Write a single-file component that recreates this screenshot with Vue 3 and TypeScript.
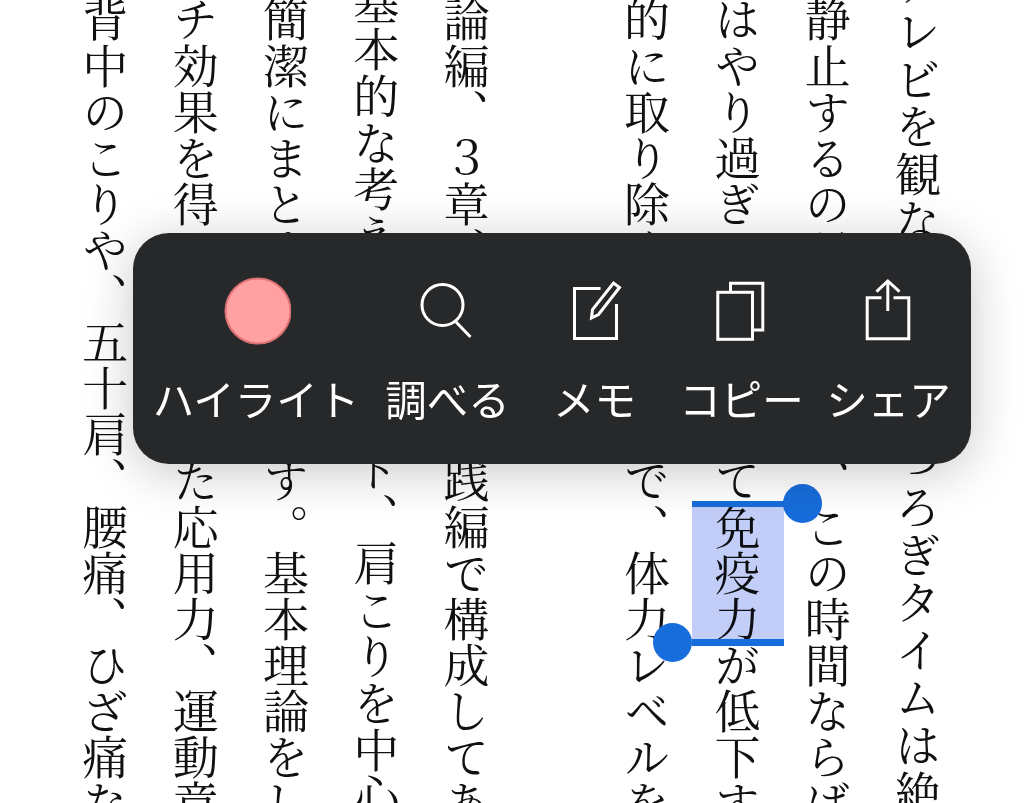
<script setup lang="ts">
interface Column {
  text: string
  top: number
  spacing: number
}

const columns: Column[] = [
  { text: 'テレビを観ながらのくつろぎタイムは絶', top: -39.6, spacing: 1.6 },
  { text: '静止するのがよいです、この時間ならば', top: -4, spacing: 0.1 },
  { text: 'はやり過ぎると、疲れて免疫力が低下す', top: -4, spacing: 0.1 },
  { text: '的に取り除くことなどで、体力レベルを', top: -4, spacing: 0.1 },
  { text: '', top: -4, spacing: 0.1 },
  { text: '論編、３章、４章の実践編で構成してあ', top: -4, spacing: 0.1 },
  { text: '基本的な考え方とノート、肩こりを中心', top: -20.7, spacing: 0.7 },
  { text: '簡潔にまとめてあります。基本理論をし', top: -4, spacing: 0.1 },
  { text: 'チ効果を得るようにした応用力、運動章', top: -4, spacing: 0.1 },
  { text: '背中のこりや、五十肩、腰痛、ひざ痛な', top: -4, spacing: 0.1 },
]
</script>

<template>
  <div class="screen" lang="ja">
    <div class="page">
      <div
        v-for="(col, i) in columns"
        :key="i"
        class="column"
        :style="{ marginTop: col.top + 'px', letterSpacing: col.spacing + 'px' }"
      >{{ col.text }}</div>
    </div>

    <div class="selection">
      <span class="tint"></span>
      <span class="handle handle-top"></span>
      <span class="handle handle-bottom"></span>
    </div>

    <div class="menu">
      <div class="item">
        <svg class="icon" viewBox="0 0 70 70">
          <circle cx="37" cy="35" r="32.5" fill="#ffa0a3" stroke="#dd7275" stroke-width="2" />
        </svg>
        <span class="label">ハイライト</span>
      </div>
      <div class="item">
        <svg class="icon" viewBox="0 0 70 70">
          <circle class="line" cx="29.5" cy="29" r="20.5" />
          <path class="line" d="M43 46 L57.5 61" />
        </svg>
        <span class="label">調べる</span>
      </div>
      <div class="item">
        <svg class="icon" viewBox="0 0 70 70">
          <path class="line" d="M40.5 12.5 H14.5 V62.5 H56.5 V28" />
          <path class="line" d="M31.5 42 L32.5 33.5 L53.5 7 L59.5 11.5 L38.5 38.5 Z" />
        </svg>
        <span class="label">メモ</span>
      </div>
      <div class="item">
        <svg class="icon" viewBox="0 0 70 70">
          <rect class="line" x="10.8" y="16.3" width="34.7" height="47" />
          <path class="line" d="M23.5 16.3 V7.3 H55.8 V54 H45.5" />
        </svg>
        <span class="label">コピー</span>
      </div>
      <div class="item">
        <svg class="icon" viewBox="0 0 70 70">
          <path class="line" d="M27.5 21.7 H13.2 V62.7 H54.8 V21.7 H39.5" />
          <path class="line" d="M33.8 35 V5 M22.5 15.7 L33.8 5 L45.5 15.7" />
        </svg>
        <span class="label">シェア</span>
      </div>
    </div>
  </div>
</template>

<style scoped>
.screen {
  position: relative;
  width: 1024px;
  height: 803px;
  overflow: hidden;
  background: #fff;
}

.page {
  display: flex;
  flex-direction: row-reverse;
  height: 803px;
  padding-right: 61px;
  box-sizing: border-box;
}

.column {
  flex: none;
  width: 90.3px;
  height: 900px;
  writing-mode: vertical-rl;
  white-space: nowrap;
  font-family: "Noto Serif CJK JP", "Noto Sans CJK JP", serif;
  font-size: 46px;
  line-height: 90.3px;
  color: #111;
}

.selection {
  position: absolute;
  left: 691.5px;
  top: 501px;
  width: 92.5px;
  height: 145px;
  box-sizing: border-box;
  border-top: 6px solid #176ddb;
  border-bottom: 7px solid #176ddb;
}

.tint {
  display: block;
  height: 100%;
  background: #c2cef8;
  mix-blend-mode: multiply;
}

.handle {
  position: absolute;
  width: 39px;
  height: 39px;
  border-radius: 50%;
  background: #176ddb;
}

.handle-top {
  left: 91px;
  top: -23px;
}

.handle-bottom {
  left: -38.5px;
  bottom: -23px;
}

.menu {
  position: absolute;
  left: 133px;
  top: 233px;
  width: 838px;
  height: 231px;
  box-sizing: border-box;
  padding: 43px 9px 0 5px;
  display: grid;
  grid-template-columns: 236px repeat(4, 147px);
  border-radius: 36px;
  background: #27282a;
  box-shadow: 0 8px 50px rgba(0, 0, 0, 0.22);
}

.item {
  display: flex;
  flex-direction: column;
  align-items: center;
}

.icon {
  width: 70px;
  height: 70px;
}

.line {
  fill: none;
  stroke: #fff;
  stroke-width: 3;
}

.label {
  margin-top: 24px;
  white-space: nowrap;
  font-family: "Noto Sans CJK JP", sans-serif;
  font-size: 41.5px;
  font-weight: 400;
  line-height: 56px;
  color: #fff;
}
</style>
